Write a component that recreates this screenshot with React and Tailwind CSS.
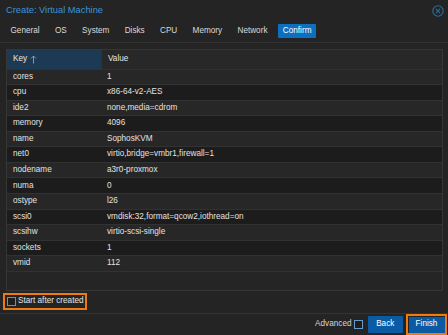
import React from "react"

const tabs = ["General", "OS", "System", "Disks", "CPU", "Memory", "Network", "Confirm"]

const rows = [
  ["cores", "1"],
  ["cpu", "x86-64-v2-AES"],
  ["ide2", "none,media=cdrom"],
  ["memory", "4096"],
  ["name", "SophosKVM"],
  ["net0", "virtio,bridge=vmbr1,firewall=1"],
  ["nodename", "a3r0-proxmox"],
  ["numa", "0"],
  ["ostype", "l26"],
  ["scsi0", "vmdisk:32,format=qcow2,iothread=on"],
  ["scsihw", "virtio-scsi-single"],
  ["sockets", "1"],
  ["vmid", "112"],
]

function CloseIcon() {
  return (
    <svg width="12" height="12" viewBox="0 0 12 12" fill="none" stroke="#2b6d9a" strokeWidth="1.1">
      <circle cx="6" cy="6" r="5.2" />
      <path d="M3.9 3.9l4.2 4.2M8.1 3.9l-4.2 4.2" />
    </svg>
  )
}

export default function App() {
  return (
    <div className="w-[448px] h-[335px] bg-[#242424] overflow-hidden flex flex-col text-[8.2px] text-[#e2e2e2] font-['Liberation_Sans',Arial,sans-serif] leading-none">
      {/* Title */}
      <div className="h-[21px] flex items-center justify-between pl-[6px] pr-[4px]">
        <span className="text-[9.3px] text-[#3a94d8]">Create: Virtual Machine</span>
        <CloseIcon />
      </div>

      {/* Tabs */}
      <div className="h-[22px] flex items-start pt-[3px] pl-[5.5px] gap-[5.3px] border-b border-[#333333]">
        {tabs.map((t) => (
          <div
            key={t}
            className={`h-[14px] px-[5px] flex items-center rounded-[1px] ${
              t === "Confirm" ? "bg-[#0c6fc0] text-white" : "text-[#dadada]"
            }`}
          >
            {t}
          </div>
        ))}
      </div>

      {/* Grid */}
      <div className="mt-[6px] ml-[6px] w-[437px] h-[242px] border border-[#363636] flex flex-col">
        <div className="h-[18.5px] flex shrink-0">
          <div className="w-[94px] bg-[#1d3a54] flex items-center pl-[6px] gap-[3px] text-[#e6e6e6]">
            Key
            <svg width="7" height="9" viewBox="0 0 7 9" fill="none" stroke="#8fa3b6" strokeWidth="0.9">
              <path d="M3.5 8.5V1M1 3.5l2.5-2.5 2.5 2.5" />
            </svg>
          </div>
          <div className="flex-1 bg-[#282828] flex items-center pl-[6px] text-[#e6e6e6] border-l border-[#303030]">
            Value
          </div>
        </div>
        {rows.map(([k, v], i) => (
          <div
            key={k}
            className={`h-[15.57px] shrink-0 flex items-center border-t border-[#323232] ${
              i % 2 === 0 ? "bg-[#272727]" : "bg-[#1c1c1c]"
            }`}
          >
            <div className="w-[94px] pl-[6px]">{k}</div>
            <div className="pl-[6px]">{v}</div>
          </div>
        ))}
        <div className="flex-1 border-t border-[#323232] bg-[#252525]" />
      </div>

      {/* Start after created */}
      <div className="mt-[1.5px] ml-[3px] w-[84px] h-[17px] border-2 border-[#ee7a12] flex items-center pl-[2px] gap-[2px]">
        <div className="w-[9px] h-[9px] border border-[#8a8a8a] bg-[#1e1e1e]" />
        <span className="text-[#e6e6e6]">Start after created</span>
      </div>

      {/* Footer */}
      <div className="mt-auto h-[22px] border-t border-[#333333] flex items-center justify-end pr-[1px]">
        <span className="text-[#d4d4d4]">Advanced</span>
        <div className="ml-[2px] w-[9px] h-[9px] border border-[#6b9cc8] bg-[#1e1e1e]" />
        <div className="ml-[5px] w-[35.5px] h-[16.5px] bg-[#0b5ba4] text-white flex items-center justify-center rounded-[1px]">
          Back
        </div>
        <div className="ml-[3px] w-[41px] h-[21px] border-2 border-[#ee7a12] p-[0.5px] flex">
          <div className="flex-1 bg-[#0b5ba4] text-white flex items-center justify-center">Finish</div>
        </div>
      </div>
    </div>
  )
}
